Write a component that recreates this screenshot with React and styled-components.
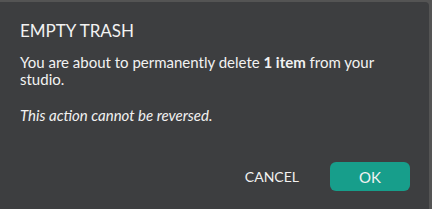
import React from "react";
import styled, { createGlobalStyle } from "styled-components";

const Global = createGlobalStyle`
  html, body {
    margin: 0;
    background: #545454;
    overflow: hidden;
  }
`;

const EmptyTrashDialog = () => {
  return (
    <>
      <Global />
      <Dialog>
        <Title>EMPTY TRASH</Title>
        <Message>
          You are about to permanently delete <strong>1 item</strong> from your
          studio.
        </Message>
        <Warning>This action cannot be reversed.</Warning>
        <Actions>
          <Button>CANCEL</Button>
          <Button primary>OK</Button>
        </Actions>
      </Dialog>
    </>
  );
};

// styled components
const Dialog = styled.div`
  margin-top: 2px;
  width: 429px;
  height: 207px;
  box-sizing: border-box;
  padding: 18px 19px 0 20px;
  background: #3d3e40;
  border-top-right-radius: 4px;
  color: #f2f2f2;
  font-family: Lato, "Noto Sans", sans-serif;
`;

const Title = styled.h2`
  margin: 0;
  font-size: 17px;
  font-weight: normal;
  line-height: 22px;
`;

const Message = styled.p`
  margin: 12px 0 0;
  font-size: 15px;
  line-height: 17px;
  strong {
    font-weight: bold;
  }
`;

const Warning = styled.p`
  margin: 19px 0 0;
  font-size: 15px;
  line-height: 17px;
  font-style: italic;
`;

const Actions = styled.div`
  display: flex;
  justify-content: flex-end;
  align-items: center;
  gap: 31px;
  margin-top: 38px;
`;

const Button = styled.button`
  width: ${(p) => (p.primary ? "80px" : "auto")};
  height: 29px;
  padding: 0;
  border: none;
  border-radius: 6px;
  background: ${(p) => (p.primary ? "#179e8b" : "transparent")};
  color: #f2f2f2;
  font-family: Lato, "Noto Sans", sans-serif;
  font-size: ${(p) => (p.primary ? "15px" : "14px")};
  cursor: pointer;
`;

export default EmptyTrashDialog;
